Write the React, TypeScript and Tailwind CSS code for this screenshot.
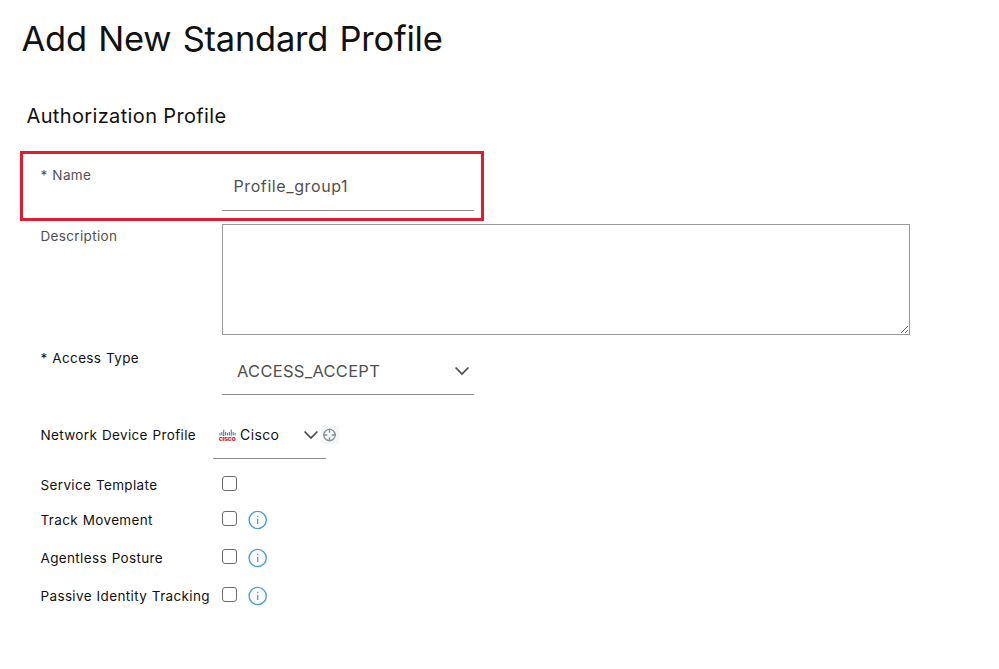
import type { ReactNode } from "react";

function Chevron() {
  return (
    <svg width="16" height="10" viewBox="0 0 16 10" fill="none" stroke="#4a4a4a" strokeWidth="1.7">
      <path d="M1.6 1.5 8 8.1l6.4-6.6" />
    </svg>
  );
}

function InfoIcon() {
  return (
    <svg width="20" height="20" viewBox="0 0 20 20" fill="none" stroke="#4a9fd8" strokeWidth="1.4">
      <circle cx="9.7" cy="10" r="8.6" />
      <path d="M9.7 8.7v5.2M9.7 5.8v1.5" strokeWidth="1.3" />
    </svg>
  );
}

function CiscoLogo() {
  const bars = [
    [1, 4, 2.5],
    [3, 3, 3.5],
    [5, 0.5, 6.5],
    [7, 3, 3.5],
    [9, 4, 2.5],
    [11, 3, 3.5],
    [13, 0.5, 6.5],
    [15, 3, 3.5],
    [17, 4, 2.5],
  ];
  return (
    <span className="flex w-[18px] flex-col items-center">
      <svg width="17" height="7" viewBox="0 0 18 7" fill="#54809f">
        {bars.map(([x, y, h]) => (
          <rect key={x} x={x - 0.6} y={y} width="1.2" height={h} />
        ))}
      </svg>
      <span className="text-[7px] leading-[6px] font-extrabold tracking-[-0.4px] text-[#c9353f]">
        cisco
      </span>
    </span>
  );
}

function TargetIcon() {
  return (
    <svg width="18" height="18" viewBox="0 0 18 18" fill="none" stroke="#84919e">
      <rect width="18" height="18" fill="#f5f6f8" stroke="none" />
      <circle cx="8.5" cy="9" r="5.7" strokeWidth="1.3" />
      <path d="M8.5 2.5v4.3M8.5 11.2v4.3M2 9h4.3M10.7 9H15" strokeWidth="1.3" />
    </svg>
  );
}

function Label({ children, className = "" }: { children: ReactNode; className?: string }) {
  return (
    <label
      className={`shrink-0 text-[13.5px] leading-5 tracking-[0.35px] whitespace-nowrap [word-spacing:0.6px] ${className}`}
    >
      {children}
    </label>
  );
}

function CheckRow({
  label,
  info = false,
  className,
}: {
  label: string;
  info?: boolean;
  className: string;
}) {
  return (
    <div className={`flex items-center ${className}`}>
      <Label className="w-[181.5px] pt-[2px]">{label}</Label>
      <input
        type="checkbox"
        aria-label={label}
        className="size-[15px] appearance-none rounded-[3px] border border-[#6c6c6c] bg-white"
      />
      {info && (
        <span className="ml-[11px] pt-[3px]">
          <InfoIcon />
        </span>
      )}
    </div>
  );
}

export default function App() {
  return (
    <main className="h-[669px] w-[999px] overflow-hidden bg-white font-['Inter',sans-serif] text-[#111]">
      <h1 className="h-[96px] pt-[15px] pl-[21.5px] text-[34.5px] leading-[47px] font-normal tracking-[-0.25px] [word-spacing:2px]">
        Add New Standard Profile
      </h1>
      <h2 className="h-[55px] pt-[6px] pl-[26.5px] text-xl leading-7 tracking-[0.36px]">
        Authorization Profile
      </h2>

      <div className="ml-[20px] flex h-[70px] w-[464px] border-3 border-[#e11b30] pl-[17.5px] text-[#505050]">
        <Label className="w-[181.5px] pt-[11px]">* Name</Label>
        <input
          type="text"
          aria-label="Name"
          defaultValue="Profile_group1"
          className="h-[57px] w-[252px] border-b border-[#8f8f8f] pt-[8px] pl-[11.5px] text-base tracking-[0.6px] outline-none"
        />
      </div>

      <div className="pl-[40.5px]">
        <div className="flex h-[114px] pt-[3px]">
          <Label className="w-[181.5px] pt-[2px] text-[#505050]">Description</Label>
          <textarea
            aria-label="Description"
            className="h-[111px] w-[688px] resize border border-[#999] outline-none"
          />
        </div>

        <div className="flex h-[60px]">
          <Label className="w-[181.5px] pt-[13px] tracking-[0.5px]">* Access Type</Label>
          <div className="flex w-[252px] items-center justify-between border-b border-[#8f8f8f] pt-[13px] pr-[4px] pl-[15px] text-[#505050]">
            <span className="text-[16.5px] tracking-[0.27px]">ACCESS_ACCEPT</span>
            <Chevron />
          </div>
        </div>

        <div className="flex h-[64px]">
          <Label className="w-[172.5px] pt-[30px]">Network Device Profile</Label>
          <div className="flex w-[113px] items-center border-b border-[#8f8f8f] pt-[17px] pl-[5px]">
            <CiscoLogo />
            <span className="ml-[4px] text-sm tracking-[0.4px]">Cisco</span>
            <span className="ml-auto pr-[7px]">
              <Chevron />
            </span>
          </div>
          <span className="-ml-[5px] pt-[31px]">
            <TargetIcon />
          </span>
        </div>

        <CheckRow label="Service Template" className="h-[49px]" />
        <CheckRow label="Track Movement" info className="h-[21px]" />
        <CheckRow label="Agentless Posture" info className="h-[55px]" />
        <CheckRow label="Passive Identity Tracking" info className="h-[21px]" />
      </div>
    </main>
  );
}
